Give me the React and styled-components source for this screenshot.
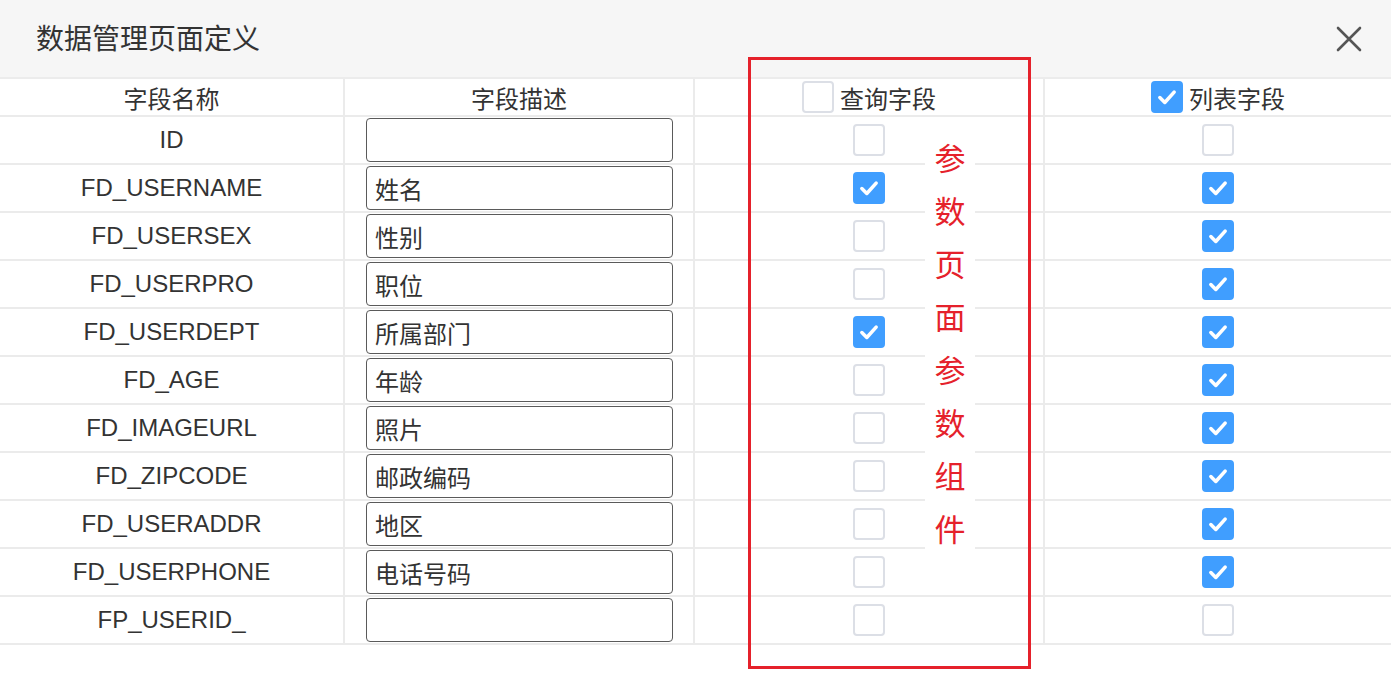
import React from "react";
import styled, { createGlobalStyle } from "styled-components";

const GlobalStyle = createGlobalStyle`
  html, body {
    margin: 0;
    padding: 0;
    background: #fff;
    font-family: "Liberation Sans", "Noto Sans CJK SC", sans-serif;
    color: #333;
  }
`;

const Dialog = styled.div`
  position: relative;
  width: 1391px;
  height: 673px;
  background: #fff;
  overflow: hidden;
`;

const Header = styled.header`
  height: 77px;
  background: #f6f6f6;
  border-bottom: 2px solid #ececec;
  display: flex;
  align-items: center;
  justify-content: space-between;
  padding: 0 22px 0 36px;
`;

const Title = styled.h2`
  margin: 0 0 4px 0;
  font-size: 28px;
  font-weight: 400;
  color: #333;
`;

const CloseBtn = styled.button`
  border: none;
  background: none;
  padding: 0;
  width: 40px;
  height: 40px;
  display: flex;
  align-items: center;
  justify-content: center;
  cursor: pointer;
`;

const Table = styled.div`
  display: grid;
  grid-template-columns: 345px 350px 350px 1fr;
`;

const Cell = styled.div`
  height: ${(p) => (p.head ? "36px" : "46px")};
  border-bottom: 2px solid #ebebeb;
  border-right: ${(p) => (p.last ? "none" : "2px solid #ebebeb")};
  display: flex;
  align-items: center;
  justify-content: ${(p) => (p.left ? "flex-start" : "center")};
  padding-left: ${(p) => (p.left ? "21px" : "0")};
  font-size: 24px;
  color: #333;
  gap: 6px;
`;

const TextInput = styled.div`
  box-sizing: border-box;
  width: 307px;
  height: 44px;
  border: 1px solid #5a5a5a;
  border-radius: 4px;
  display: flex;
  align-items: center;
  padding-left: 8px;
  font-size: 24px;
  color: #333;
`;

const Box = styled.span`
  box-sizing: border-box;
  width: 32px;
  height: 32px;
  border-radius: 4px;
  border: 2px solid ${(p) => (p.checked ? "#409eff" : "#dcdfe6")};
  background: ${(p) => (p.checked ? "#409eff" : "#fff")};
  display: inline-flex;
  align-items: center;
  justify-content: center;
  flex-shrink: 0;
`;

const Annotation = styled.div`
  position: absolute;
  left: 748px;
  top: 57px;
  width: 277px;
  height: 606px;
  border: 3px solid #e5212b;
`;

const Note = styled.div`
  position: absolute;
  left: 925px;
  top: 130px;
  width: 50px;
  background: #fff;
  color: #e5212b;
  font-size: 31px;
  line-height: 53px;
  text-align: center;
  font-family: "Noto Sans CJK SC", sans-serif;
`;

const Check = ({ checked }) => (
  <Box checked={checked}>
    {checked && (
      <svg width="22" height="22" viewBox="0 0 20 20">
        <path d="M3.5 10.5 L8 15 L16.5 5.5" fill="none" stroke="#fff" strokeWidth="3.2" strokeLinecap="round" strokeLinejoin="round" />
      </svg>
    )}
  </Box>
);

const rows = [
  ["ID", "", false, false],
  ["FD_USERNAME", "姓名", true, true],
  ["FD_USERSEX", "性别", false, true],
  ["FD_USERPRO", "职位", false, true],
  ["FD_USERDEPT", "所属部门", true, true],
  ["FD_AGE", "年龄", false, true],
  ["FD_IMAGEURL", "照片", false, true],
  ["FD_ZIPCODE", "邮政编码", false, true],
  ["FD_USERADDR", "地区", false, true],
  ["FD_USERPHONE", "电话号码", false, true],
  ["FP_USERID_", "", false, false],
];

export default function App() {
  return (
    <>
      <GlobalStyle />
      <Dialog>
        <Header>
          <Title>数据管理页面定义</Title>
          <CloseBtn aria-label="close">
            <svg width="26" height="26" viewBox="0 0 26 26">
              <path d="M2 2 L24 24 M24 2 L2 24" stroke="#555" strokeWidth="2.6" strokeLinecap="round" />
            </svg>
          </CloseBtn>
        </Header>
        <Table>
          <Cell head>字段名称</Cell>
          <Cell head>字段描述</Cell>
          <Cell head>
            <Check checked={false} />
            查询字段
          </Cell>
          <Cell head last>
            <Check checked />
            列表字段
          </Cell>
          {rows.map(([name, desc, q, l]) => (
            <React.Fragment key={name}>
              <Cell>{name}</Cell>
              <Cell left>
                <TextInput>{desc}</TextInput>
              </Cell>
              <Cell>
                <Check checked={q} />
              </Cell>
              <Cell last>
                <Check checked={l} />
              </Cell>
            </React.Fragment>
          ))}
        </Table>
        <Annotation />
        <Note>
          参<br />数<br />页<br />面<br />参<br />数<br />组<br />件
        </Note>
      </Dialog>
    </>
  );
}
